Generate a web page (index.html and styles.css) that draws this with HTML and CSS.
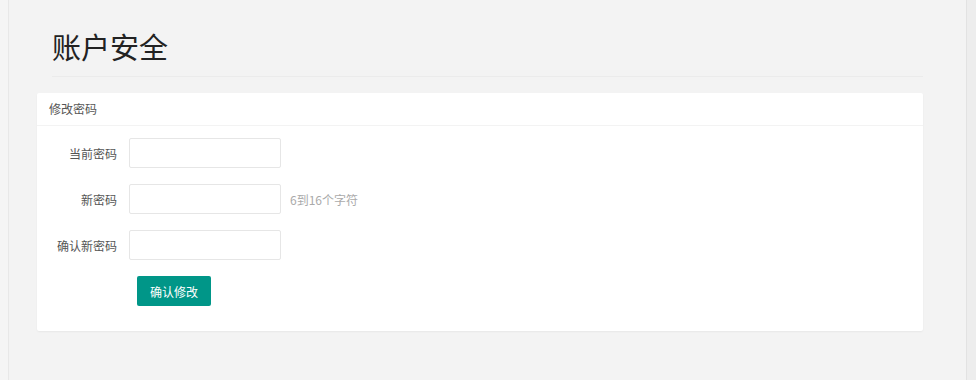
FILE: index.html
```html
<!DOCTYPE html>
<html>
<head>
<meta charset="utf-8">
<meta name="viewport" content="width=device-width, initial-scale=1">
<title>账户安全</title>
<link rel="stylesheet" href="styles.css">
</head>
<body>

<div class="frame">
  <div class="edge-left"></div>
  <div class="main">
    <h1 class="page-title">账户安全</h1>

    <div class="card">
      <div class="card-header">修改密码</div>
      <div class="card-body">
        <div class="form-item">
          <label class="form-label" for="oldPassword">当前密码</label>
          <input type="password" class="form-input" name="oldPassword" id="oldPassword">
        </div>
        <div class="form-item">
          <label class="form-label" for="password">新密码</label>
          <input type="password" class="form-input" name="password" id="password">
          <span class="form-hint">6到16个字符</span>
        </div>
        <div class="form-item">
          <label class="form-label" for="repassword">确认新密码</label>
          <input type="password" class="form-input" name="repassword" id="repassword">
        </div>
        <div class="form-item form-submit">
          <button class="btn" id="setPwd">确认修改</button>
        </div>
      </div>
    </div>
  </div>
  <div class="edge-right"></div>
</div>

</body>
</html>
```

FILE: styles.css
```css
html, body {height: 100%;}
body {
  margin: 0;
  background-color: #f3f3f3;
  font-family: "Noto Sans CJK SC", "Noto Sans", sans-serif;
  font-size: 12px;
  color: #555;
}

.frame {
  display: flex;
  min-height: 100%;
}

.edge-left {
  width: 8px;
  border-right: 1px solid #e8e8e8;
  background-color: #f5f5f5;
}

.main {
  flex: 1;
  padding: 0 43px 0 28px;
}

.edge-right {
  width: 9px;
  border-left: 1px solid #e2e2e2;
  background-color: #ededed;
}

.page-title {
  margin: 31px 0 0 15px;
  padding-bottom: 15px;
  border-bottom: 1px solid #ebebeb;
  font-size: 29px;
  line-height: 30px;
  font-weight: normal;
  color: #222;
}

.card {
  margin-top: 16px;
  background-color: #fff;
  border-radius: 2px;
  box-shadow: 0 1px 2px rgba(0, 0, 0, 0.05);
}

.card-header {
  height: 32px;
  line-height: 32px;
  padding: 0 12px;
  border-bottom: 1px solid #f3f3f3;
  color: #555;
}

.card-body {
  padding: 12px 0 25px 0;
}

.form-item {
  display: flex;
  align-items: center;
  margin-bottom: 16px;
}

.form-item + .form-item {
  margin-top: 0;
}

.form-label {
  width: 80px;
  padding-right: 12px;
  text-align: right;
  color: #555;
}

.form-input {
  width: 152px;
  height: 30px;
  box-sizing: border-box;
  padding: 0 8px;
  border: 1px solid #e6e6e6;
  border-radius: 2px;
  background-color: #fff;
  outline: none;
}

.form-hint {
  margin-left: 9px;
  color: #aaa;
}

.form-submit {
  margin: 0;
  padding-left: 100px;
}

.btn {
  height: 30px;
  padding: 0 13px;
  border: none;
  border-radius: 2px;
  background-color: #009688;
  color: #fff;
  font-family: inherit;
  font-size: 12px;
  cursor: pointer;
}

.btn:hover {
  opacity: 0.8;
}
```
